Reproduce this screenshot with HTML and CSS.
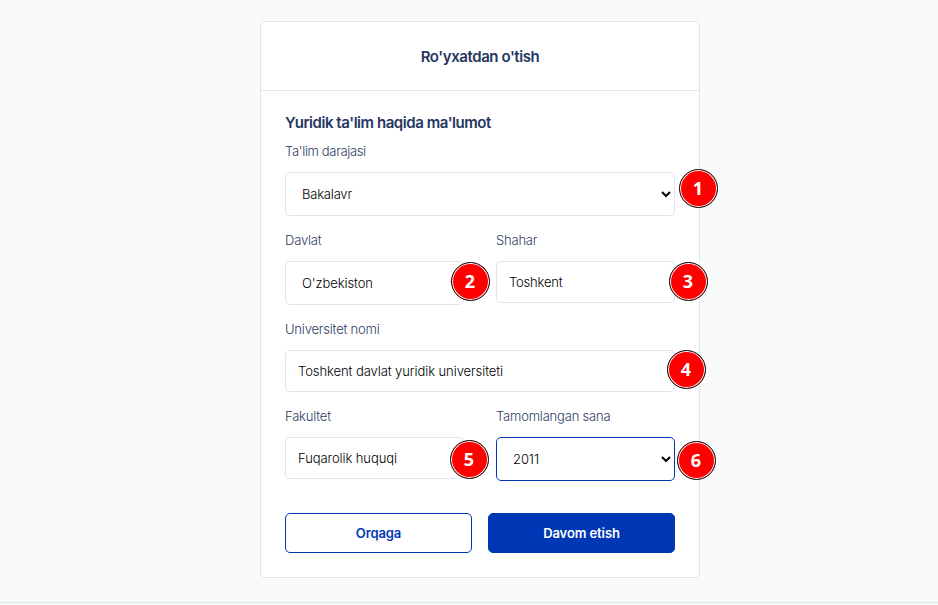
FILE: index.html
```html
<!DOCTYPE html>
<html lang="uz">
<head>
<meta charset="utf-8">
<title>Ro'yxatdan o'tish</title>
<link rel="stylesheet" href="styles.css">
</head>
<body>
<main class="page">
  <section class="card">
    <header class="card-header"><h1 class="title">Ro'yxatdan o'tish</h1></header>
    <form class="card-body">
      <h2 class="heading">Yuridik ta'lim haqida ma'lumot</h2>
      <div class="field">
        <label class="label l-degree" for="degree">Ta'lim darajasi</label>
        <select class="control select v-degree" id="degree"><option>Bakalavr</option></select>
        <span class="badge b1">1</span>
      </div>
      <div class="row">
        <div class="field">
          <label class="label l-country" for="country">Davlat</label>
          <select class="control select v-country" id="country"><option>O'zbekiston</option></select>
          <span class="badge b2">2</span>
        </div>
        <div class="field">
          <label class="label l-city" for="city">Shahar</label>
          <input class="control v-city" id="city" value="Toshkent">
          <span class="badge b3">3</span>
        </div>
      </div>
      <div class="field">
        <label class="label l-university" for="university">Universitet nomi</label>
        <input class="control v-university" id="university" value="Toshkent davlat yuridik universiteti">
        <span class="badge b4">4</span>
      </div>
      <div class="row">
        <div class="field">
          <label class="label l-faculty" for="faculty">Fakultet</label>
          <input class="control v-faculty" id="faculty" value="Fuqarolik huquqi">
          <span class="badge b5">5</span>
        </div>
        <div class="field">
          <label class="label l-date" for="date">Tamomlangan sana</label>
          <select class="control select active v-date" id="date"><option>2011</option></select>
          <span class="badge b6">6</span>
        </div>
      </div>
      <div class="actions">
        <button class="button secondary" type="button">Orqaga</button>
        <button class="button primary" type="button">Davom etish</button>
      </div>
    </form>
  </section>
</main>
<footer class="footer"></footer>
</body>
</html>
```
FILE: styles.css
```css
* { box-sizing: border-box; }
body {
  margin: 0;
  height: 605px;
  overflow: hidden;
  background: #f9fbfa;
  color: #253858;
  font-family: Inter, "Liberation Sans", sans-serif;
}
.page { height: 602px; padding: 21px 0 0 22px; }
.card {
  width: 440px;
  height: 557px;
  margin: 0 auto;
  background: #fff;
  border: 1px solid #dfe5f0;
  border-radius: 5px;
}
.card-header {
  height: 69px;
  padding-top: 1px;
  display: flex;
  align-items: center;
  justify-content: center;
  border-bottom: 1px solid #dfe5f0;
}
.title, .heading {
  margin: 0;
  font-size: 15px;
  line-height: 20px;
  font-weight: 600;
  color: #253660;
  letter-spacing: -0.45px;
}
.title { letter-spacing: -0.42px; }
.heading { margin-bottom: 10px; }
.card-body { padding: 22px 24px 24px; }
.field { position: relative; margin-bottom: 16px; }
.label {
  display: block;
  width: max-content;
  margin-bottom: 12px;
  font-size: 13px;
  font-weight: 300;
  line-height: 17px;
  color: #2d3b64;
  letter-spacing: -0.2px;
}
.l-degree { letter-spacing: -0.35px; }
.control {
  display: block;
  width: 100%;
  height: 42px;
  padding: 0 12px;
  border: 1px solid #dfe5f0;
  border-radius: 5px;
  outline: 0;
  background: #fff;
  color: #000;
  font: 300 13px Inter, "Liberation Sans", sans-serif;
  letter-spacing: -0.08px;
}
.select { height: 44px; padding: 0 0 0 12px; }
.v-degree, .v-city { letter-spacing: -0.2px; }
.active { border-color: #0037b4; }
.row { display: grid; grid-template-columns: 1fr 1fr; gap: 32px; }
.actions { display: grid; grid-template-columns: 1fr 1fr; gap: 16px; margin-top: 16px; }
.button {
  height: 40px;
  border: 1px solid #0037b4;
  border-radius: 5px;
  font: 600 13px Inter, "Liberation Sans", sans-serif;
  letter-spacing: -0.1px;
}
.secondary { background: #fff; color: #0037b4; }
.primary { background: #0037b4; color: #fff; }
.badge {
  position: absolute;
  width: 39px;
  height: 39px;
  border: 1.5px solid #111;
  border-radius: 50%;
  background: #f00;
  box-shadow: inset 0 0 0 1px #fff;
  color: #fff;
  font: 700 18px/37px "Noto Sans", sans-serif;
  text-align: center;
}
.b1 { left: 393.5px; top: 25.5px; }
.b2 { left: 165.5px; top: 29.5px; }
.b3 { left: 172.5px; top: 29.5px; }
.b4 { left: 381.5px; top: 28.5px; }
.b5 { left: 164.5px; top: 31.5px; }
.b6 { left: 180.5px; top: 32.5px; }
.footer { height: 3px; border-top: 1px solid #dfe5f0; }
```
